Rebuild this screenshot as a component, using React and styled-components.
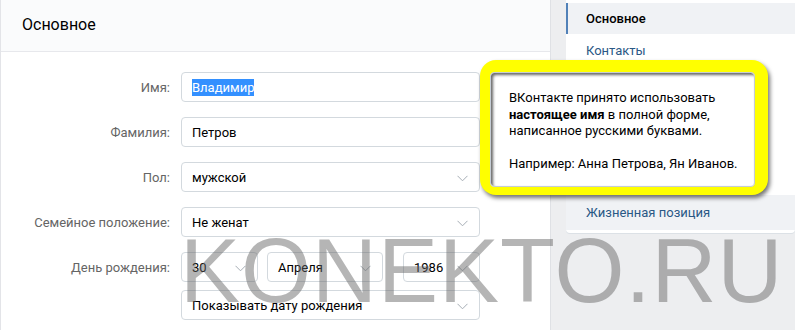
import styled, { createGlobalStyle } from "styled-components";

const GlobalStyle = createGlobalStyle`
 html, body {
  margin: 0;
  padding: 0;
  background: #edeef0;
  font-family: Roboto, "Open Sans", Arial, sans-serif;
  -webkit-font-smoothing: antialiased;
 }
 * {
  box-sizing: border-box;
 }
`;

const fields = [
 { label: "Имя:", value: "Владимир", selected: true },
 { label: "Фамилия:", value: "Петров" },
 { label: "Пол:", value: "мужской", select: true },
 { label: "Семейное положение:", value: "Не женат", select: true },
];

const navItems = [
 "Основное",
 "Контакты",
 "Интересы",
 "Образование",
 "Карьера",
 "Военная служба",
];

function Chevron() {
 return (
  <ChevronIcon width="11" height="7" viewBox="0 0 11 7">
   <polyline points="0.5,0.8 5.5,5.8 10.5,0.8" fill="none" stroke="#a6adb5" strokeWidth="1" />
  </ChevronIcon>
 );
}

export default function App() {
 return (
  <>
   <GlobalStyle />
   <Page>
    <MainCard>
     <CardHeader>Основное</CardHeader>
     <Form>
      {fields.map((f) => (
       <Row key={f.label}>
        <Label>{f.label}</Label>
        <Field>
         {f.selected ? <Selected>{f.value}</Selected> : f.value}
         {f.select && <Chevron />}
        </Field>
       </Row>
      ))}
      <Row>
       <Label>День рождения:</Label>
       <DateGroup>
        <Field $w="77px">
         30
         <Chevron />
        </Field>
        <Field $w="116px">
         Апреля
         <Chevron />
        </Field>
        <Field $w="77px">
         1986
         <Chevron />
        </Field>
       </DateGroup>
      </Row>
      <Row $tight>
       <span />
       <Field>
        Показывать дату рождения
        <Chevron />
       </Field>
      </Row>
     </Form>
    </MainCard>

    <NavCard>
     {navItems.map((item, i) => (
      <NavItem key={item} $active={i === 0}>
       {item}
      </NavItem>
     ))}
     <NavItem $hover>Жизненная позиция</NavItem>
    </NavCard>

    <Callout>
     <CalloutBody>
      ВКонтакте принято использовать <b>настоящее имя</b> в полной форме,
      написанное русскими буквами.
      <br />
      <br />
      Например: Анна Петрова, Ян Иванов.
     </CalloutBody>
    </Callout>

    <Watermark>KONEKTO.RU</Watermark>
   </Page>
  </>
 );
}

const Page = styled.div`
 position: relative;
 display: flex;
 align-items: flex-start;
 gap: 15px;
 width: 795px;
 height: 330px;
 overflow: hidden;
`;

const MainCard = styled.div`
 width: 551px;
 height: 340px;
 flex-shrink: 0;
 background: #fff;
 border-left: 1px solid #e3e4e8;
 border-right: 1px solid #dfe1e5;
`;

const CardHeader = styled.div`
 height: 52px;
 padding: 0 21px 3px;
 display: flex;
 align-items: center;
 background: #fafbfc;
 border-bottom: 1px solid #e7e8ec;
 font-size: 16px;
 color: #000;
`;

const Form = styled.div`
 display: flex;
 flex-direction: column;
 padding-top: 20px;
`;

const Row = styled.div`
 display: grid;
 grid-template-columns: 169px 299px;
 column-gap: 11px;
 align-items: center;
 margin-bottom: ${(p) => (p.$tight ? "0" : "15px")};
 margin-top: ${(p) => (p.$tight ? "-7px" : "0")};
`;

const Label = styled.div`
 text-align: right;
 font-size: 13px;
 color: #656565;
`;

const Field = styled.div`
 width: ${(p) => p.$w || "299px"};
 height: 30px;
 display: flex;
 align-items: center;
 justify-content: space-between;
 padding: 0 11px 0 10px;
 border: 1px solid #d3d9de;
 border-radius: 4px;
 background: #fff;
 font-size: 13px;
 color: #000;
 white-space: nowrap;
`;

const Selected = styled.span`
 background: #3390ff;
 color: #fff;
 padding: 1px 0;
`;

const ChevronIcon = styled.svg`
 flex-shrink: 0;
 margin-top: 2px;
`;

const DateGroup = styled.div`
 display: flex;
 gap: 9px;
 width: 299px;

 & > div:nth-child(2) {
  margin-right: 11px;
 }
`;

const NavCard = styled.div`
 width: 229px;
 flex-shrink: 0;
 background: #fff;
 padding: 3px 0;
 border-radius: 0 0 4px 4px;
 box-shadow: 0 1px 0 #dce1e6;
`;

const NavItem = styled.div`
 height: ${(p) => (p.$hover ? "35px" : p.$active ? "31px" : "32px")};
 margin-top: ${(p) => (p.$hover ? "1px" : "0")};
 display: flex;
 align-items: center;
 padding-left: ${(p) => (p.$active ? "18px" : "20px")};
 font-size: 13px;
 color: ${(p) => (p.$active ? "#000" : "#2a5885")};
 font-weight: ${(p) => (p.$active ? 500 : 400)};
 background: ${(p) => (p.$active || p.$hover ? "#f0f2f5" : "transparent")};
 border-left: ${(p) => (p.$active ? "2px solid #5181b8" : "none")};
`;

const Callout = styled.div`
 position: absolute;
 left: 480px;
 top: 60px;
 width: 288px;
 height: 135px;
 padding: 12px 13px 8px 10px;
 background: #ffff00;
 border-radius: 16px;
 box-shadow: 2px 3px 4px rgba(0, 0, 0, 0.55);
`;

const CalloutBody = styled.div`
 height: 100%;
 padding: 17px 10px 0 18px;
 background: #fff;
 border: 1px solid #c5ccd4;
 border-radius: 4px;
 box-shadow: inset 2px 2px 3px rgba(0, 0, 0, 0.6);
 font-size: 13px;
 line-height: 16.5px;
 color: #000;

 b {
  font-weight: 700;
 }
`;

const Watermark = styled.div`
 position: absolute;
 left: 180px;
 top: 221px;
 font-family: "Liberation Sans", Arial, sans-serif;
 font-size: 90px;
 line-height: 100px;
 color: rgba(100, 100, 100, 0.48);
 letter-spacing: 1px;
 pointer-events: none;
 white-space: nowrap;
`;
